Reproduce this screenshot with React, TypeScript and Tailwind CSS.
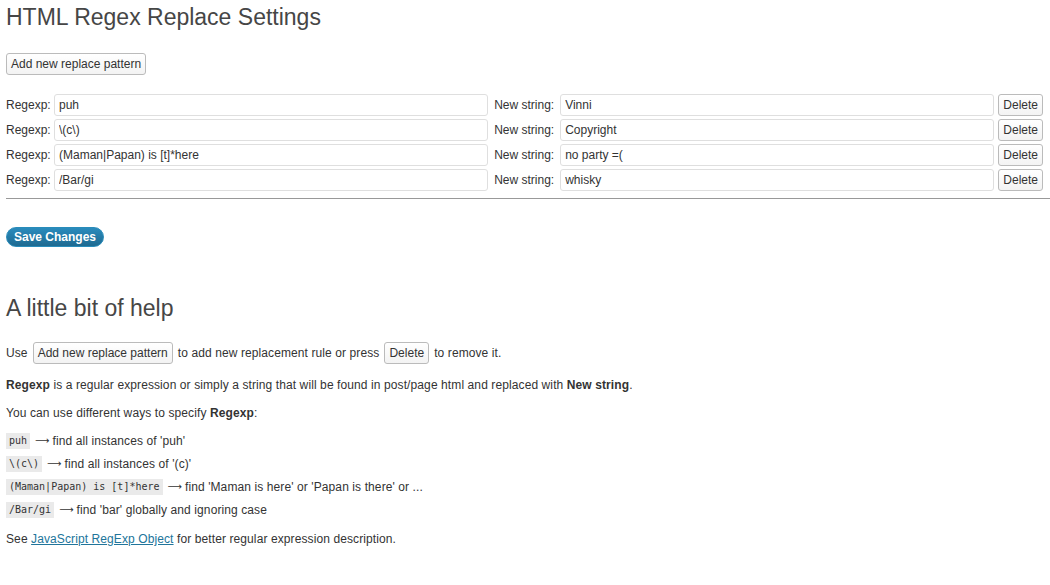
const rows = [
  { regexp: 'puh', replace: 'Vinni' },
  { regexp: '\\(c\\)', replace: 'Copyright' },
  { regexp: '(Maman|Papan) is [t]*here', replace: 'no party =(' },
  { regexp: '/Bar/gi', replace: 'whisky' },
];

const examples = [
  { code: 'puh', text: "find all instances of 'puh'" },
  { code: '\\(c\\)', text: "find all instances of '(c)'" },
  { code: '(Maman|Papan) is [t]*here', text: "find 'Maman is here' or 'Papan is there' or ..." },
  { code: '/Bar/gi', text: "find 'bar' globally and ignoring case" },
];

function SmallButton({ children }: { children: React.ReactNode }) {
  return (
    <button className="h-[22px] px-[4px] border border-[#bbb] rounded-[3px] bg-gradient-to-b from-white to-[#f3f3f3] text-[12px] text-[#333] leading-none whitespace-nowrap tracking-normal">
      {children}
    </button>
  );
}

export default function App() {
  return (
    <div className="min-h-[585px] w-full bg-white pl-[6px] pr-[7px] text-[12px] text-[#333] font-['Liberation_Sans',Arial,sans-serif]">
      <h2 className="pt-[3px] text-[23px] leading-[29px] text-[#464646]">HTML Regex Replace Settings</h2>

      <div className="mt-[21px]">
        <SmallButton>Add new replace pattern</SmallButton>
      </div>

      <div className="mt-[19px] flex flex-col gap-[3px]">
        {rows.map((r, i) => (
          <div key={i} className="flex items-center h-[22px]">
            <span className="w-[48px] shrink-0">Regexp:</span>
            <input
              readOnly
              value={r.regexp}
              className="flex-1 min-w-0 h-[22px] px-[4px] border border-[#dfdfdf] rounded-[3px] bg-white text-[12px] text-[#333] outline-none"
            />
            <span className="ml-[6px] w-[66px] shrink-0">New string:</span>
            <input
              readOnly
              value={r.replace}
              className="flex-1 min-w-0 h-[22px] px-[4px] border border-[#dfdfdf] rounded-[3px] bg-white text-[12px] text-[#333] outline-none"
            />
            <div className="ml-[4px] shrink-0">
              <SmallButton>Delete</SmallButton>
            </div>
          </div>
        ))}
      </div>

      <div className="mt-[7px] -mr-[7px] border-t border-[#999] border-b border-b-white" />

      <div className="mt-[27px]">
        <button className="h-[20px] w-[98px] rounded-full bg-gradient-to-b from-[#2a8bbd] to-[#1e6a91] text-white text-[12px] font-bold leading-none border border-[#298cba]">
          Save Changes
        </button>
      </div>

      <h2 className="mt-[47px] text-[23px] leading-[29px] text-[#464646]">A little bit of help</h2>

      <div className="tracking-[0.1px]">
        <div className="mt-[19px] flex items-center gap-[5px]">
          <span>Use</span>
          <SmallButton>Add new replace pattern</SmallButton>
          <span>to add new replacement rule or press</span>
          <SmallButton>Delete</SmallButton>
          <span>to remove it.</span>
        </div>

        <p className="mt-[12px] leading-[18px]">
          <b>Regexp</b> is a regular expression or simply a string that will be found in post/page html and replaced with <b>New string</b>.
        </p>

        <p className="mt-[10px] leading-[18px]">
          You can use different ways to specify <b>Regexp</b>:
        </p>

        <div className="mt-[10px] flex flex-col gap-[5px]">
          {examples.map((e, i) => (
            <div key={i} className="flex items-center h-[18px]">
              <code className="bg-[#eaeaea] px-[3px] py-[1px] text-[10px] leading-[14px] tracking-normal font-['DejaVu_Sans_Mono',monospace] text-[#333]">
                {e.code}
              </code>
              <span className="ml-[5px] font-['DejaVu_Sans',sans-serif] text-[10px] leading-none">⟶</span>
              <span className="ml-[3px]">{e.text}</span>
            </div>
          ))}
        </div>

        <p className="mt-[11px] leading-[18px]">
          See{' '}
          <a href="#" className="text-[#21759b] underline">
            JavaScript RegExp Object
          </a>{' '}
          for better regular expression description.
        </p>
      </div>
    </div>
  );
}
